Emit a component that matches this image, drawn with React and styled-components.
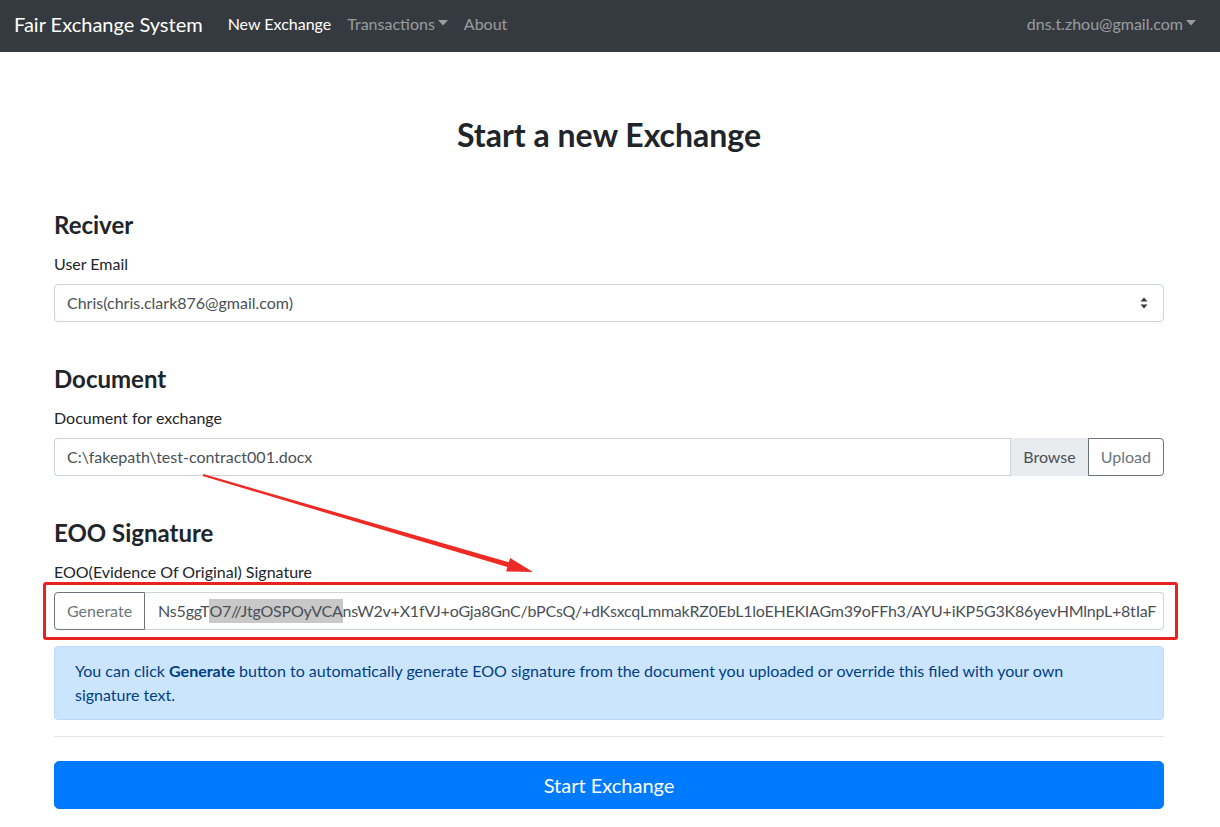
import React from "react";
import styled, { createGlobalStyle } from "styled-components";

const GlobalStyle = createGlobalStyle`
  body {
    margin: 0;
    background: #fff;
    font-family: Lato, "Liberation Sans", sans-serif;
    color: #212529;
    font-size: 16px;
    line-height: 1.5;
  }
  * { box-sizing: border-box; }
`;

const App = () => {
  const signature =
    "AYU+iKP5G3K86yevHMlnpL+8tIaF";

  return (
    <>
      <GlobalStyle />
      <NavBar>
        <Brand>Fair Exchange System</Brand>
        <NavLinks>
          <NavLink active>New Exchange</NavLink>
          <NavLink>
            Transactions <Caret />
          </NavLink>
          <NavLink>About</NavLink>
        </NavLinks>
        <UserMenu>
          dns.t.zhou@gmail.com <Caret />
        </UserMenu>
      </NavBar>

      <Container>
        <Title>Start a new Exchange</Title>

        <Section>
          <Heading>Reciver</Heading>
          <Label>User Email</Label>
          <Select>
            <span>Chris(chris.clark876@gmail.com)</span>
            <svg width="8" height="12" viewBox="0 0 8 12">
              <path d="M4 0.5 L7.5 4.5 L0.5 4.5 Z" fill="#343a40" />
              <path d="M4 11.5 L7.5 7.5 L0.5 7.5 Z" fill="#343a40" />
            </svg>
          </Select>
        </Section>

        <Section>
          <Heading>Document</Heading>
          <Label>Document for exchange</Label>
          <FileGroup>
            <FileText>C:\fakepath\test-contract001.docx</FileText>
            <BrowseLabel>Browse</BrowseLabel>
            <OutlineButton side="right">Upload</OutlineButton>
          </FileGroup>
        </Section>

        <Section>
          <Heading>EOO Signature</Heading>
          <Label>EOO(Evidence Of Original) Signature</Label>
          <Annotated>
            <InputGroup>
              <OutlineButton side="left">Generate</OutlineButton>
              <SigField>
                Ns5ggT<Selected>O7//JtgOSPOyVCA</Selected>nsW2v+X1fVJ+oGja8GnC/bPCsQ/+dKsxcqLmmakRZ0EbL1loEHEKIAGm39oFFh3/{signature}
              </SigField>
            </InputGroup>
            <RedFrame />
          </Annotated>
          <Alert>
            You can click <b>Generate</b> button to automatically generate EOO
            signature from the document you uploaded or override this filed with
            your own signature text.
          </Alert>
        </Section>

        <Divider />
        <PrimaryButton>Start Exchange</PrimaryButton>

        <Arrow width="340" height="110" viewBox="0 0 340 110">
          <path
            d="M3.3 4.0 L308.8 92.3 L310.1 88.0 L333 102 L306.1 101.4 L307.4 97.1 L2.7 6.0 Z"
            fill="#ee2a24"
          />
        </Arrow>
      </Container>
    </>
  );
};

export default App;

const Caret = () => (
  <svg width="10" height="6" viewBox="0 0 10 6" style={{ marginLeft: 3, marginBottom: 2 }}>
    <path d="M0 0 L10 0 L5 5.5 Z" fill="currentColor" />
  </svg>
);

const NavBar = styled.nav`
  height: 52px;
  background-color: #343a40;
  display: flex;
  align-items: center;
  padding: 0 24px 4px 14px;
`;

const Brand = styled.div`
  font-size: 20px;
  color: #fff;
  margin-right: 25px;
`;

const NavLinks = styled.div`
  display: flex;
  gap: 16px;
  align-items: center;
`;

const NavLink = styled.div`
  font-size: 16px;
  color: ${(p) => (p.active ? "#fff" : "rgba(255,255,255,0.5)")};
  display: flex;
  align-items: center;
`;

const UserMenu = styled.div`
  margin-left: auto;
  font-size: 16px;
  color: rgba(255, 255, 255, 0.5);
  display: flex;
  align-items: center;
`;

const Container = styled.main`
  width: 1110px;
  margin-left: calc(50% - 556px);
  padding: 64px 0 40px;
  position: relative;
`;

const Title = styled.h2`
  margin: 0 0 56px;
  font-size: 32px;
  font-weight: 700;
  line-height: 38px;
  text-align: center;
  color: #212529;
`;

const Section = styled.section`
  margin-bottom: 42px;
  &:last-of-type {
    margin-bottom: 16px;
  }
`;

const Heading = styled.h4`
  margin: 0 0 13px;
  font-size: 24px;
  font-weight: 700;
  line-height: 29px;
`;

const Label = styled.div`
  font-size: 16px;
  line-height: 24px;
  margin-bottom: 8px;
`;

const controlBase = `
  height: 38px;
  border: 1px solid #ced4da;
  font-size: 16px;
  color: #495057;
  background: #fff;
`;

const Select = styled.div`
  ${controlBase}
  border-radius: 4px;
  display: flex;
  align-items: center;
  justify-content: space-between;
  padding: 0 15px 0 12px;
`;

const FileGroup = styled.div`
  ${controlBase}
  display: flex;
  align-items: stretch;
  border-radius: 4px;
  border-right: none;
`;

const FileText = styled.div`
  flex: 1;
  display: flex;
  align-items: center;
  padding: 0 12px;
`;

const BrowseLabel = styled.div`
  display: flex;
  align-items: center;
  padding: 0 12px;
  background: #e9ecef;
  border-left: 1px solid #ced4da;
  margin: -1px 0;
`;

const OutlineButton = styled.div`
  display: flex;
  align-items: center;
  padding: 0 12px;
  margin: -1px 0;
  border: 1px solid #6c757d;
  color: #6c757d;
  font-size: 16px;
  background: #fff;
  border-radius: ${(p) => (p.side === "left" ? "4px 0 0 4px" : "0 4px 4px 0")};
`;

const Annotated = styled.div`
  position: relative;
`;

const InputGroup = styled.div`
  ${controlBase}
  display: flex;
  align-items: stretch;
  border-radius: 4px;
  border-left: none;
`;

const SigField = styled.div`
  flex: 1;
  display: flex;
  align-items: center;
  padding: 0 12px;
  white-space: pre;
  overflow: hidden;
  margin-left: 1px;
  letter-spacing: -0.22px;
`;

const Selected = styled.span`
  background: #c8c8c8;
`;

const RedFrame = styled.div`
  position: absolute;
  left: -11px;
  right: -14px;
  top: -10px;
  bottom: -10px;
  border: 3px solid #e8231f;
  border-radius: 3px;
  pointer-events: none;
`;

const Arrow = styled.svg`
  position: absolute;
  left: 146px;
  top: 418px;
  pointer-events: none;
`;

const Alert = styled.div`
  margin-top: 16px;
  padding: 12px 70px 12px 20px;
  background: #cce5ff;
  border: 1px solid #b8daff;
  border-radius: 4px;
  color: #004085;
  font-size: 16px;
  line-height: 24px;
`;

const Divider = styled.hr`
  margin: 0 0 24px;
  border: 0;
  border-top: 1px solid rgba(0, 0, 0, 0.1);
`;

const PrimaryButton = styled.button`
  display: block;
  width: 100%;
  height: 48px;
  border: 1px solid #007bff;
  background: #007bff;
  color: #fff;
  border-radius: 5px;
  font-family: inherit;
  font-size: 20px;
`;
